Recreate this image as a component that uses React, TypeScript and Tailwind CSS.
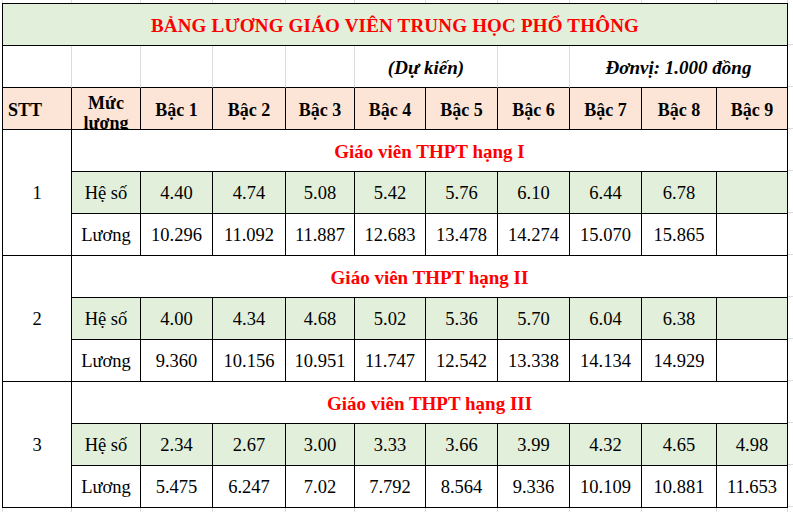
type Section = {
  stt: string;
  title: string;
  heSo: string[];
  luong: string[];
};

const COLS = [69, 69, 72, 73, 69, 71, 72, 72, 72, 75, 71];

const SECTIONS: Section[] = [
  {
    stt: "1",
    title: "Giáo viên THPT hạng I",
    heSo: ["4.40", "4.74", "5.08", "5.42", "5.76", "6.10", "6.44", "6.78", ""],
    luong: ["10.296", "11.092", "11.887", "12.683", "13.478", "14.274", "15.070", "15.865", ""],
  },
  {
    stt: "2",
    title: "Giáo viên THPT hạng II",
    heSo: ["4.00", "4.34", "4.68", "5.02", "5.36", "5.70", "6.04", "6.38", ""],
    luong: ["9.360", "10.156", "10.951", "11.747", "12.542", "13.338", "14.134", "14.929", ""],
  },
  {
    stt: "3",
    title: "Giáo viên THPT hạng III",
    heSo: ["2.34", "2.67", "3.00", "3.33", "3.66", "3.99", "4.32", "4.65", "4.98"],
    luong: ["5.475", "6.247", "7.02", "7.792", "8.564", "9.336", "10.109", "10.881", "11.653"],
  },
];

const BAC = ["Bậc 1", "Bậc 2", "Bậc 3", "Bậc 4", "Bậc 5", "Bậc 6", "Bậc 7", "Bậc 8", "Bậc 9"];

// text sits a touch low in the sheet, so nudge everything down
const cell = "flex items-center justify-center border-r border-b border-black pt-[3px]";

function GridStrip({ height }: { height: string }) {
  return (
    <div className={`flex ${height}`}>
      <div className="w-[2px] shrink-0" />
      <div className="w-px shrink-0 bg-[#dcdcdc]" />
      {COLS.map((w, i) => (
        <div key={i} style={{ width: w }} className="shrink-0 border-r border-[#dcdcdc]" />
      ))}
    </div>
  );
}

export default function App() {
  return (
    <div className="h-[512px] w-[793px] overflow-hidden bg-white font-['Liberation_Serif',serif] text-black">
      <GridStrip height="h-[3px]" />
      <div className="flex">
        <div className="ml-[2px] grid grid-cols-[69px_69px_72px_73px_69px_71px_72px_72px_72px_75px_71px] auto-rows-[42px] border-l border-t border-black">
          {/* title */}
          <div className={`${cell} col-span-11 bg-[#e2efda] text-[19px] font-bold tracking-[0.2px] text-[#ff0000]`}>
            BẢNG LƯƠNG GIÁO VIÊN TRUNG HỌC PHỔ THÔNG
          </div>

          {/* note row */}
          <div className="border-r border-b border-r-[#dcdcdc] border-b-black" />
          <div className="border-r border-b border-r-[#dcdcdc] border-b-black" />
          <div className="border-r border-b border-r-[#dcdcdc] border-b-black" />
          <div className="border-r border-b border-r-[#dcdcdc] border-b-black" />
          <div className="border-r border-b border-r-[#dcdcdc] border-b-black" />
          <div className="col-span-2 flex items-center justify-center border-r border-b border-r-[#dcdcdc] border-b-black pt-[3px] text-[19px] font-bold italic">
            (Dự kiến)
          </div>
          <div className="border-r border-b border-r-[#dcdcdc] border-b-black" />
          <div className="col-span-3 flex items-center justify-center border-r border-b border-black pt-[3px] text-[19px] font-bold italic">
            Đơnvị: 1.000 đồng
          </div>

          {/* header */}
          <div className="flex items-center border-r border-b border-black bg-[#fce4d6] pt-[3px] pl-[5px] text-[18px] font-bold">
            STT
          </div>
          <div className="overflow-hidden border-r border-b border-black bg-[#fce4d6] pt-[5px] text-center text-[18px] leading-[20px] font-bold">
            Mức
            <br />
            lương
          </div>
          {BAC.map((b) => (
            <div key={b} className={`${cell} bg-[#fce4d6] text-[18px] font-bold`}>
              {b}
            </div>
          ))}

          {SECTIONS.map((s) => (
            <div key={s.stt} className="contents">
              <div className={`${cell} row-span-3 text-[18.5px]`}>{s.stt}</div>
              <div className={`${cell} col-span-10 text-[19px] font-bold text-[#ff0000]`}>{s.title}</div>
              <div className={`${cell} bg-[#e2efda] text-[18.5px]`}>Hệ số</div>
              {s.heSo.map((v, i) => (
                <div key={i} className={`${cell} bg-[#e2efda] text-[18.5px]`}>
                  {v}
                </div>
              ))}
              <div className={`${cell} text-[18.5px]`}>Lương</div>
              {s.luong.map((v, i) => (
                <div key={i} className={`${cell} text-[18.5px]`}>
                  {v}
                </div>
              ))}
            </div>
          ))}
        </div>
        <div className="flex w-[6px] flex-col">
          {Array.from({ length: 12 }).map((_, i) => (
            <div key={i} className="h-[42px] shrink-0 border-b border-[#dcdcdc]" />
          ))}
        </div>
      </div>
      <GridStrip height="h-[8px]" />
    </div>
  );
}
